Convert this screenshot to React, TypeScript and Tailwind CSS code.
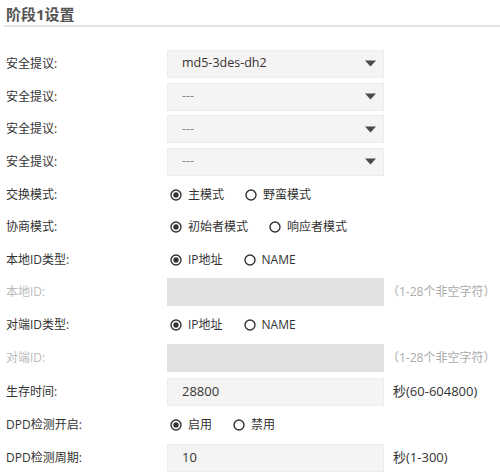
import React from "react";

const FONT = { fontFamily: '"Open Sans", "Noto Sans CJK SC", sans-serif' };

type Row =
  | { kind: "select"; label: string; value: string; h: string }
  | { kind: "radio"; label: string; options: string[]; h: string }
  | { kind: "input"; label: string; value: string; suffix: string; disabled?: boolean; h: string };

const ROWS: Row[] = [
  { kind: "select", label: "安全提议:", value: "md5-3des-dh2", h: "h-[33px]" },
  { kind: "select", label: "安全提议:", value: "---", h: "h-[33px]" },
  { kind: "select", label: "安全提议:", value: "---", h: "h-[32px]" },
  { kind: "select", label: "安全提议:", value: "---", h: "h-[33px]" },
  { kind: "radio", label: "交换模式:", options: ["主模式", "野蛮模式"], h: "h-[33px]" },
  { kind: "radio", label: "协商模式:", options: ["初始者模式", "响应者模式"], h: "h-[32px]" },
  { kind: "radio", label: "本地ID类型:", options: ["IP地址", "NAME"], h: "h-[33px]" },
  { kind: "input", label: "本地ID:", value: "", suffix: "（1-28个非空字符）", disabled: true, h: "h-[32px]" },
  { kind: "radio", label: "对端ID类型:", options: ["IP地址", "NAME"], h: "h-[33px]" },
  { kind: "input", label: "对端ID:", value: "", suffix: "（1-28个非空字符）", disabled: true, h: "h-[34px]" },
  { kind: "input", label: "生存时间:", value: "28800", suffix: "秒(60-604800)", h: "h-[33px]" },
  { kind: "radio", label: "DPD检测开启:", options: ["启用", "禁用"], h: "h-[33px]" },
  { kind: "input", label: "DPD检测周期:", value: "10", suffix: "秒(1-300)", h: "h-[33px]" },
];

function Radio({ checked }: { checked: boolean }) {
  return (
    <svg width="12" height="12" viewBox="0 0 12 12" className="shrink-0">
      <circle cx="6" cy="6" r="5" fill="white" stroke="#333" strokeWidth="1.4" />
      {checked && <circle cx="6" cy="6" r="2.7" fill="#333" />}
    </svg>
  );
}

function Arrow() {
  return (
    <svg width="11" height="7" viewBox="0 0 11 7">
      <path d="M0 0.5 H11 L5.5 6.5 Z" fill="#4a4a4a" />
    </svg>
  );
}

export default function App() {
  return (
    <div className="w-[500px] h-[475px] bg-white overflow-hidden" style={FONT}>
      <div className="ml-[4px] h-[27px] border-b-2 border-[#e2e2e2] pl-[2px] pt-[2px]">
        <span className="text-[15px] font-bold leading-[20px] text-[#555]">阶段1设置</span>
      </div>

      <div className="mt-[20px] pl-[6px]">
        {ROWS.map((row, i) => (
          <div key={i} className={`flex items-center ${row.h}`}>
            <div
              className={`w-[161px] shrink-0 text-[12px] ${
                row.kind === "input" && row.disabled ? "text-[#bbb]" : "text-[#333]"
              }`}
            >
              {row.label}
            </div>

            {row.kind === "select" && (
              <div className="flex h-[28px] w-[217px] items-center justify-between border border-[#ececec] bg-[#f4f4f4] pl-[14px] pr-[7px]">
                <span
                  className={`text-[12.5px] ${row.value === "---" ? "text-[#888]" : "text-[#3a3030]"}`}
                >
                  {row.value}
                </span>
                <Arrow />
              </div>
            )}

            {row.kind === "radio" && (
              <div className="flex items-center pl-[3px]">
                {row.options.map((opt, j) => (
                  <div key={opt} className="mr-[21px] flex items-center">
                    <Radio checked={j === 0} />
                    <span className="ml-[6px] text-[12px] text-[#333]">{opt}</span>
                  </div>
                ))}
              </div>
            )}

            {row.kind === "input" && (
              <>
                <div
                  className={`flex h-[28px] w-[217px] items-center pl-[14px] ${
                    row.disabled
                      ? "bg-[#e1e1e1]"
                      : "border border-[#ececec] bg-[#f4f4f4]"
                  }`}
                >
                  <span className="text-[13px] text-[#333]">{row.value}</span>
                </div>
                <span
                  className={
                    row.disabled
                      ? "ml-[3px] text-[12px] text-[#aaa]"
                      : "ml-[9px] text-[13px] text-[#333]"
                  }
                >
                  {row.suffix}
                </span>
              </>
            )}
          </div>
        ))}
      </div>
    </div>
  );
}
